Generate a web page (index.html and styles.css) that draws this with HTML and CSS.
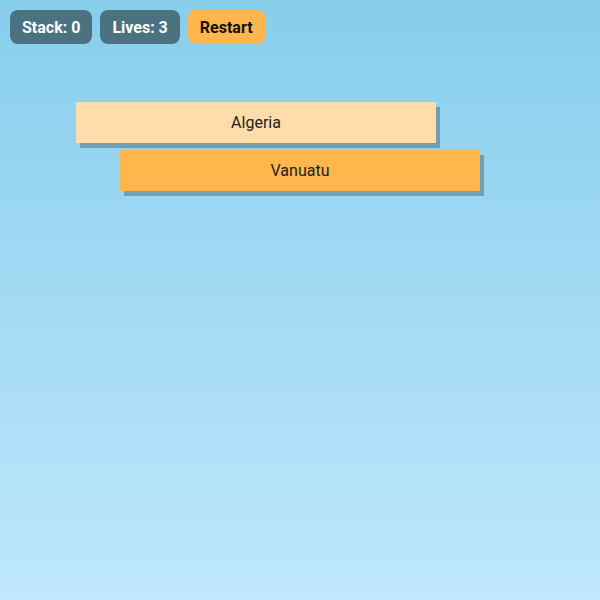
FILE: index.html
```html
<!DOCTYPE html>
<html>
<head>
<meta charset="utf-8">
<link rel="stylesheet" href="styles.css">
</head>
<body>
<div class="game">
  <div class="hud">
    <div class="pill">Stack: 0</div>
    <div class="pill">Lives: 3</div>
    <button class="restart">Restart</button>
  </div>
  <div class="stack">
    <div class="block placed" style="margin-left: 76px">Algeria</div>
    <div class="block moving" style="margin-left: 120px">Vanuatu</div>
  </div>
</div>
</body>
</html>
```
FILE: styles.css
```css
html, body {
  margin: 0;
  padding: 0;
  width: 100%;
  height: 100%;
}
body {
  font-family: Roboto, "Liberation Sans", sans-serif;
  background: linear-gradient(to bottom, #87ceeb 0%, #bfe7fd 100%);
  overflow: hidden;
}
.game {
  width: 600px;
  height: 600px;
}
.hud {
  display: flex;
  gap: 8px;
  padding: 10px 10px 0 10px;
}
.pill, .restart {
  height: 34px;
  box-sizing: border-box;
  padding: 0 12px;
  border-radius: 8px;
  font-size: 16px;
  font-weight: 700;
  display: flex;
  align-items: center;
  font-family: Roboto, "Liberation Sans", sans-serif;
}
.pill {
  background: rgba(0, 0, 0, 0.45);
  color: #ffffff;
}
.restart {
  background: #ffb74d;
  color: #111111;
  border: none;
}
.stack {
  padding-top: 58px;
  display: flex;
  flex-direction: column;
  gap: 7px;
}
.block {
  width: 360px;
  height: 41px;
  display: flex;
  align-items: center;
  justify-content: center;
  font-size: 16px;
  color: #222222;
  box-shadow: 4px 5px 0 rgba(0, 0, 0, 0.25);
}
.placed {
  background: #ffdcaa;
}
.moving {
  background: #ffb74d;
}
```
